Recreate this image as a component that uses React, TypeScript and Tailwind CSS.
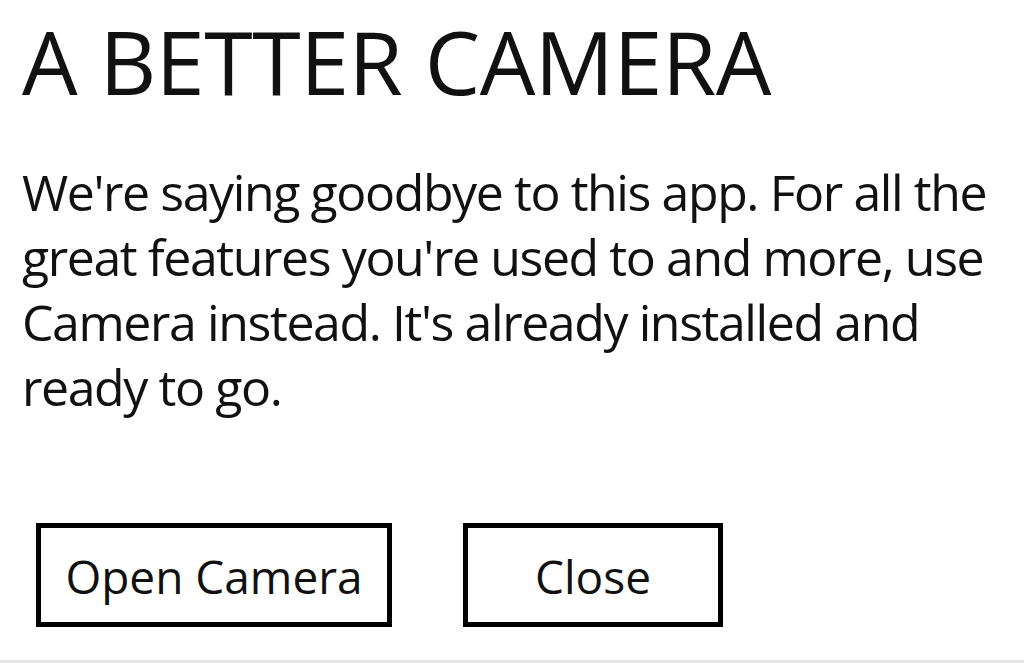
const App = () => {
  return (
    <div
      className="w-full h-[663px] bg-white text-[#111] flex flex-col overflow-hidden"
      style={{ fontFamily: '"Open Sans", "Noto Sans", sans-serif' }}
    >
      <div className="flex-1 flex flex-col pl-[22px]">
        <h1 className="mt-[13px] text-[88px] leading-[96px] font-normal tracking-[-0.5px] whitespace-nowrap">
          A BETTER CAMERA
        </h1>

        <p className="mt-[51px] text-[50px] leading-[65px] tracking-[-1.4px] whitespace-nowrap">
          We're saying goodbye to this app. For all the
          <br />
          great features you're used to and more, use
          <br />
          Camera instead. It's already installed and
          <br />
          ready to go.
        </p>

        <div className="mt-[103px] flex gap-[71px] pl-[14px]">
          <button className="w-[356px] h-[104px] border-[5px] border-black text-[46px] pt-[2px] flex items-center justify-center">
            Open Camera
          </button>
          <button className="w-[260px] h-[104px] border-[5px] border-black text-[46px] pt-[2px] flex items-center justify-center">
            Close
          </button>
        </div>
      </div>
      <div className="h-[3px] bg-[#e6e6e6]" />
    </div>
  );
};

export default App;
